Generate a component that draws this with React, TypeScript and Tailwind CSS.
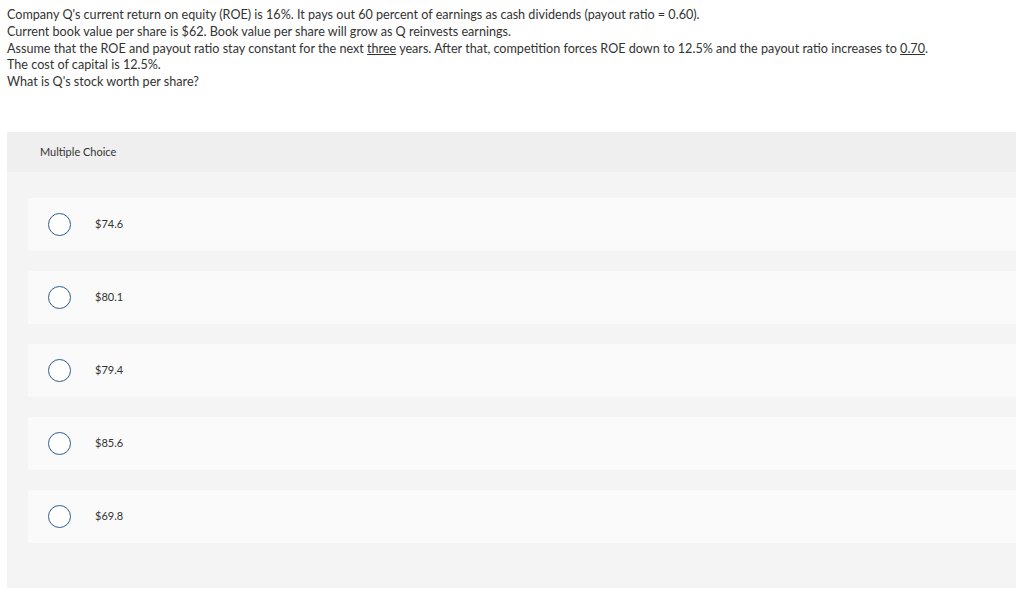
import React from "react";

const options = ["$74.6", "$80.1", "$79.4", "$85.6", "$69.8"];

export default function App() {
  return (
    <div className="w-[1016px] h-[592px] bg-white overflow-hidden" style={{ fontFamily: "Lato, 'Open Sans', sans-serif" }}>
      <div className="pt-[7px] pl-[7px] text-[12.6px] leading-[16.8px] text-[#333]">
        <p>Company Q's current return on equity (ROE) is 16%. It pays out 60 percent of earnings as cash dividends (payout ratio = 0.60).</p>
        <p>Current book value per share is $62. Book value per share will grow as Q reinvests earnings.</p>
        <p>
          Assume that the ROE and payout ratio stay constant for the next <span className="underline">three</span> years. After that, competition forces ROE down to 12.5% and the payout ratio increases to <span className="underline">0.70</span>.
        </p>
        <p>The cost of capital is 12.5%.</p>
        <p>What is Q's stock worth per share?</p>
      </div>
      <div className="ml-[7px] mt-[41px] bg-[#f4f4f4]">
        <div className="h-[40px] bg-[#efefef] flex items-center pl-[33px] text-[11px] text-[#333]">Multiple Choice</div>
        <div className="pl-[21px] pt-[26px] pb-[45px] flex flex-col gap-[20px]">
          {options.map((o) => (
            <div key={o} className="h-[53px] bg-[#fafafa] rounded-l-[3px] flex items-center pl-[20px]">
              <div className="w-[23px] h-[23px] rounded-full border-[1.5px] border-[#2c5d8e] bg-white shrink-0" />
              <span className="ml-[24px] text-[11px] text-[#333]">{o}</span>
            </div>
          ))}
        </div>
      </div>
    </div>
  );
}
